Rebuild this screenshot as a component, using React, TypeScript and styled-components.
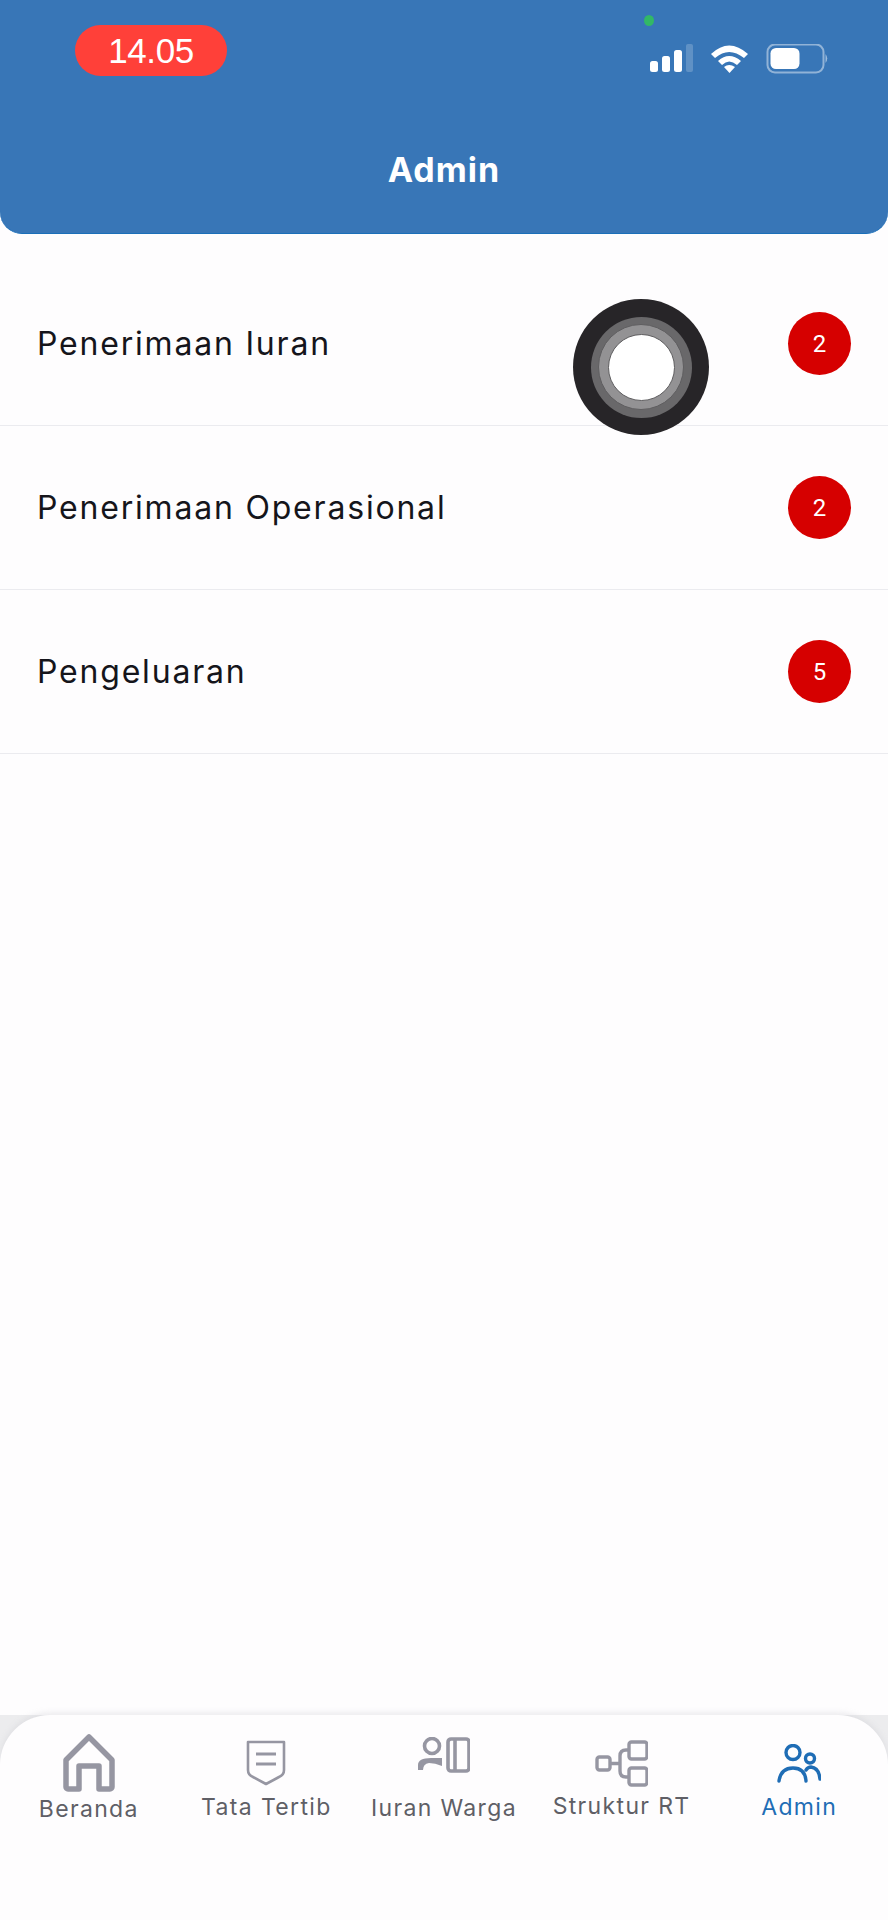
import React from "react";
import styled, { createGlobalStyle } from "styled-components";

const GlobalStyle = createGlobalStyle`
  html, body {
    margin: 0;
    padding: 0;
    background: #fefdfe;
  }
  * {
    box-sizing: border-box;
  }
`;

const Screen = styled.div`
  position: relative;
  display: flex;
  flex-direction: column;
  width: 888px;
  height: 1920px;
  overflow: hidden;
  background: #fefdfe;
  font-family: Inter, "Noto Sans", sans-serif;
`;

const Header = styled.header`
  position: relative;
  flex: none;
  height: 234px;
  padding: 25px 60px 0 75px;
  background: #3876b7;
  border-bottom: 1.5px solid #1a6fb9;
  border-radius: 0 0 22px 22px;
`;

const StatusBar = styled.div`
  display: flex;
  align-items: flex-start;
  justify-content: space-between;
`;

const TimePill = styled.div`
  display: flex;
  align-items: center;
  justify-content: center;
  width: 152px;
  height: 51px;
  border-radius: 26px;
  background: #ff4039;
  color: #fff;
  font-family: "Liberation Sans", Arial, sans-serif;
  font-size: 35px;
  letter-spacing: -0.4px;
`;

const StatusIcons = styled.svg`
  display: block;
  flex: none;
  margin-top: 19px;
`;

const GreenDot = styled.span`
  position: absolute;
  top: 15px;
  left: 644px;
  width: 10px;
  height: 11px;
  border-radius: 50%;
  background: #32b866;
`;

const HeaderTitle = styled.h1`
  margin: 74px 0 0 -15px;
  color: #fff;
  font-size: 34px;
  line-height: 40px;
  font-weight: 700;
  letter-spacing: 1px;
  text-align: center;
`;

const List = styled.main`
  flex: 1;
  padding-top: 28px;
`;

const Row = styled.div`
  display: flex;
  align-items: center;
  justify-content: space-between;
  height: 164px;
  padding: 0 37px;
  border-bottom: 1px solid #ebebef;
`;

const RowLabel = styled.span`
  color: #15151b;
  font-size: 32px;
  letter-spacing: 1.8px;
`;

const Badge = styled.span`
  display: flex;
  align-items: center;
  justify-content: center;
  width: 63px;
  height: 63px;
  border-radius: 50%;
  background: #d60000;
  color: #fff;
  font-family: Roboto, sans-serif;
  font-size: 24px;
`;

const TouchOuter = styled.div`
  position: absolute;
  top: 299px;
  left: 573px;
  display: flex;
  align-items: center;
  justify-content: center;
  width: 136px;
  height: 136px;
  border-radius: 50%;
  background: #272528;
`;

const TouchMiddle = styled.div`
  display: flex;
  align-items: center;
  justify-content: center;
  width: 101px;
  height: 101px;
  border-radius: 50%;
  background: #69686a;
`;

const TouchInner = styled.div`
  display: flex;
  align-items: center;
  justify-content: center;
  width: 86px;
  height: 86px;
  border-radius: 50%;
  background: #939294;
  border: 1px solid #5f5e60;
`;

const TouchCore = styled.div`
  width: 67px;
  height: 67px;
  border-radius: 50%;
  background: #fff;
  border: 1px solid #5f5e60;
`;

const TabBarBack = styled.div`
  flex: none;
  background: #ececee;
`;

const TabBar = styled.nav`
  display: grid;
  grid-template-columns: repeat(5, 1fr);
  height: 205px;
  background: #fefdfe;
  border-radius: 50px 50px 0 0;
  box-shadow: 0 -3px 5px rgba(190, 190, 200, 0.25);
`;

const Tab = styled.div<{ $top: number; $gap: number; $active?: boolean }>`
  display: flex;
  flex-direction: column;
  align-items: center;
  gap: ${(p) => p.$gap}px;
  padding-top: ${(p) => p.$top}px;
  color: ${(p) => (p.$active ? "#1f6db5" : "#5f5f66")};
  font-size: 23px;
  line-height: 30px;
  letter-spacing: 1.35px;
  white-space: nowrap;

  svg {
    display: block;
    flex: none;
  }
`;

const navItems = [
  {
    label: "Beranda",
    top: 19,
    gap: 2,
    icon: (
      <svg width="52" height="58" viewBox="0 0 52 58" fill="none" stroke="#9696a2" strokeWidth="5.5" strokeLinejoin="round">
        <path d="M26 3 L49 26 V53 a2 2 0 0 1 -2 2 H36 V32 H16 V55 H5 a2 2 0 0 1 -2 -2 V26 Z" />
      </svg>
    ),
  },
  {
    label: "Tata Tertib",
    top: 25,
    gap: 6,
    icon: (
      <svg width="40" height="46" viewBox="0 0 40 46" fill="none" stroke="#9696a2" strokeWidth="2.6" strokeLinejoin="round">
        <path d="M2 2 H38 V30 Q38 35 33 37 L20 44 L7 37 Q2 35 2 30 Z" />
        <path d="M10 14 H30 M10 24 H30" strokeWidth="3" />
      </svg>
    ),
  },
  {
    label: "Iuran Warga",
    top: 22,
    gap: 20,
    icon: (
      <svg width="53" height="36" viewBox="0 0 53 36" fill="none" stroke="#9696a2" strokeWidth="3.6" strokeLinejoin="round">
        <circle cx="15" cy="9" r="7.5" />
        <path d="M1 33 V28 Q1 21 14 21 H25 V29 Q18 26 12 26 Q6 27 6 33 Z" fill="#9696a2" stroke="none" />
        <rect x="31" y="2" width="21" height="32" rx="3" />
        <path d="M38 2 V34" />
      </svg>
    ),
  },
  {
    label: "Struktur RT",
    top: 25,
    gap: 4,
    icon: (
      <svg width="53" height="47" viewBox="0 0 53 47" fill="none" stroke="#9696a2" strokeWidth="3.4" strokeLinejoin="round">
        <rect x="2" y="17" width="13" height="13" rx="2.5" />
        <rect x="34" y="2" width="18" height="17" rx="2.5" />
        <rect x="34" y="28" width="18" height="17" rx="2.5" />
        <path d="M15 23.5 H25 M34 10 H31 Q25 10 25 16 V31 Q25 37 31 37 H34" />
      </svg>
    ),
  },
  {
    label: "Admin",
    top: 29,
    gap: 9,
    active: true,
    icon: (
      <svg width="44" height="39" viewBox="0 0 44 39" fill="none" stroke="#1f6db5" strokeWidth="3.4" strokeLinecap="round">
        <circle cx="16" cy="8.500" r="7" />
        <circle cx="33" cy="14.500" r="4.500" />
        <path d="M2 37 Q4 24 16 24 Q28 24 29 37" />
        <path d="M29 26 Q31 23 34 23 Q42 24 43 35" />
      </svg>
    ),
  },
];

const rows = [
  { label: "Penerimaan Iuran", count: 2 },
  { label: "Penerimaan Operasional", count: 2 },
  { label: "Pengeluaran", count: 5 },
];

const App: React.FC = () => {
  return (
    <Screen>
      <GlobalStyle />
      <Header>
        <GreenDot />
        <StatusBar>
          <TimePill>14.05</TimePill>
          <StatusIcons width="180" height="30" viewBox="0 0 180 30">
            <g fill="#fff">
              <rect x="2" y="17" width="8" height="11" rx="2.500" />
              <rect x="14" y="12" width="8" height="16" rx="2.500" />
              <rect x="26" y="6" width="8" height="22" rx="2.500" />
              <rect x="38" y="0" width="7" height="28" rx="2" opacity="0.2" />
              <path d="M63 10 Q81 -7 100 10 L96 14 Q81 2 67 14 Z" />
              <path d="M70 17 Q81 7 93 17 L89 21 Q81 14 74 21 Z" />
              <path d="M76 23 Q81 19 87 23 L81.500 29 Z" />
              <rect x="122.500" y="4" width="29" height="21" rx="5.500" />
              <path d="M177.500 10 Q181 14.500 177.500 19 Z" opacity="0.5" />
            </g>
            <rect x="119.500" y="0.500" width="56" height="28" rx="7.500" fill="none" stroke="#fff" strokeOpacity="0.45" strokeWidth="2" />
          </StatusIcons>
        </StatusBar>
        <HeaderTitle>Admin</HeaderTitle>
      </Header>
      <List>
        {rows.map((row) => (
          <Row key={row.label}>
            <RowLabel>{row.label}</RowLabel>
            <Badge>{row.count}</Badge>
          </Row>
        ))}
      </List>
      <TabBarBack>
        <TabBar>
          {navItems.map((item) => (
            <Tab key={item.label} $top={item.top} $gap={item.gap} $active={item.active}>
              {item.icon}
              <span>{item.label}</span>
            </Tab>
          ))}
        </TabBar>
      </TabBarBack>
      <TouchOuter>
        <TouchMiddle>
          <TouchInner>
            <TouchCore />
          </TouchInner>
        </TouchMiddle>
      </TouchOuter>
    </Screen>
  );
};

export default App;
